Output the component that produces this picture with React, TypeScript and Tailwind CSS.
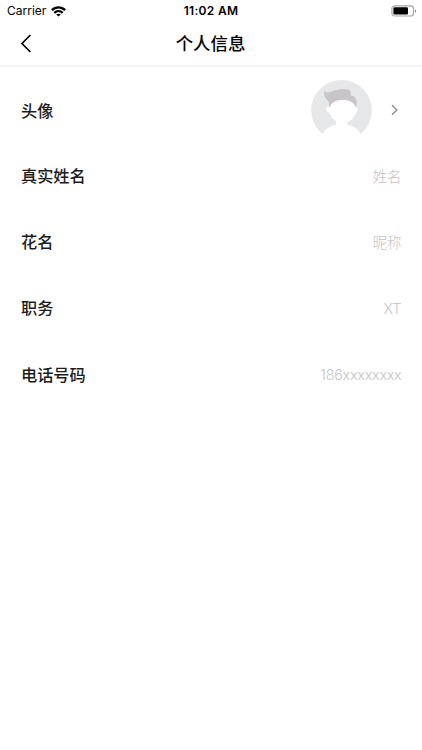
import React from 'react';

interface ProfileField {
  label: string;
  value: string;
  valueClass: string;
}

const fields: ProfileField[] = [
  { label: '真实姓名', value: '姓名', valueClass: 'pt-[2px]' },
  { label: '花名', value: '昵称', valueClass: 'pt-[2px]' },
  { label: '职务', value: 'XT', valueClass: 'pt-px' },
  { label: '电话号码', value: '186xxxxxxxx', valueClass: 'pt-px tracking-[-0.27px]' },
];

const WifiIcon: React.FC = () => (
  <svg className="ml-[5px] h-[11px] w-[15px]" viewBox="0 0 16 11" fill="none" stroke="#000" strokeWidth="2.5">
    <path d="M.9 4.1C4.9 0 11.1 0 15.1 4.1" />
    <path d="M3.5 6.9c2.6-2.4 6.4-2.4 9 0" />
    <path d="M8 10.9 5.6 8.6c1.3-1.1 3.5-1.1 4.8 0Z" fill="#000" stroke="none" />
  </svg>
);

const BatteryIcon: React.FC = () => (
  <svg className="h-[12px] w-[26px]" viewBox="0 0 26 12" fill="none">
    <rect x="0.9" y="0.8" width="21.6" height="10.2" rx="2.8" stroke="#a6a6a6" strokeWidth="1.2" />
    <rect x="2.4" y="2.3" width="14.6" height="7.2" rx="1.2" fill="#000" />
    <path d="M24 4.2c1.6.6 1.6 3 0 3.6Z" fill="#8c8c8c" />
  </svg>
);

const Avatar: React.FC = () => (
  <svg className="h-[61px] w-[61px]" viewBox="33 29 183 183">
    <circle cx="124.5" cy="120" r="91" fill="#e6e7e9" />
    {/* hair */}
    <path
      d="M91 118C85 103 89 98 83 90C77 84 72 80 72 63C79 69 91 66 107 60C123 55 145 54 151 63C154 67 152 73 151 76C162 75 167 81 169 90C171 99 169 109 166 117L129 125Z"
      fill="#c8c5c9"
    />
    {/* head with ears, then neck and shoulders */}
    <path
      d="M90 111C93 97 107 89 128 89S163 97 167 111C174 108 175 125 168 127C164 138 159 146 149 152C139 159 117 159 107 152C98 146 92 138 88 127C76 125 75 107 86 109Z"
      fill="#fff"
    />
    <path d="M109 145V157C109 163 106 165 102 165C84 168 74 180 67 193L50 215H205L182 193C175 180 166 168 147 165C143 165 142 163 142 157V145Z" fill="#fff" />
  </svg>
);

const App: React.FC = () => {
  return (
    <div className="h-[750px] w-[422px] overflow-hidden bg-white font-['Inter','Noto_Sans_CJK_SC',sans-serif] text-[#1c1c1e]">
      <div className="grid h-[22px] grid-cols-3 items-center pl-[7px] pr-[5px] text-black">
        <div className="flex items-center">
          <span className="text-[12px] leading-[22px]">Carrier</span>
          <WifiIcon />
        </div>
        <span className="pr-[2px] text-center text-[12px] font-semibold leading-[22px] tracking-[0.3px]">11:02 AM</span>
        <div className="flex justify-end">
          <BatteryIcon />
        </div>
      </div>

      <header className="grid h-[45px] grid-cols-3 items-center border-b-2 border-[#f4f4f4] px-5 text-black">
        <button type="button" className="flex h-[19px] w-3" aria-label="返回">
          <svg className="h-[19px] w-3" viewBox="0 0 12 19" fill="none" stroke="#000" strokeWidth="1.7">
            <path d="M10.4 1 2 9.5l8.4 8.5" />
          </svg>
        </button>
        <h1 className="whitespace-nowrap pr-px text-center text-[17.4px] font-medium leading-6">个人信息</h1>
      </header>

      <main className="pl-[21px] pr-[20.5px] pt-[10px]">
        <div className="flex h-[66.2px] items-center justify-between">
          <span className="pt-px text-[16.2px] font-medium leading-6">头像</span>
          <div className="flex items-center">
            <Avatar />
            <svg className="ml-[19px] mr-[4px] h-3 w-[7px]" viewBox="0 0 7 12" fill="none" stroke="#8c8c8c" strokeWidth="1.4">
              <path d="m1 1.2 4.8 4.8L1 10.8" />
            </svg>
          </div>
        </div>
        {fields.map((field) => (
          <div key={field.label} className="flex h-[66.1px] items-center justify-between">
            <span className="text-[16.2px] font-medium leading-6">{field.label}</span>
            <span className={`text-[14.4px] font-light leading-6 text-[#c4c4c6] ${field.valueClass}`}>{field.value}</span>
          </div>
        ))}
      </main>
    </div>
  );
};

export default App;
